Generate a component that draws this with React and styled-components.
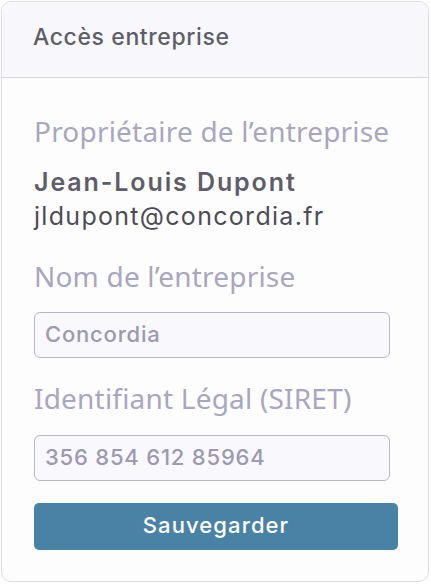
import React from "react";
import styled, { createGlobalStyle } from "styled-components";

const Global = createGlobalStyle`
  html, body { margin: 0; padding: 0; background: #ffffff; }
  * { box-sizing: border-box; }
`;

const Card = styled.section`
  margin: 1px 0 0 1px;
  width: 428px;
  height: 581px;
  border: 1px solid #dcdbe6;
  border-radius: 10px;
  background: #fdfdfe;
  overflow: hidden;
  display: flex;
  flex-direction: column;
`;

const Header = styled.header`
  height: 76px;
  flex: none;
  background: #f8f8fc;
  border-bottom: 1px solid #d6d4e2;
  padding: 21px 0 0 31px;
  font-family: Inter, "Liberation Sans", sans-serif;
  font-weight: 500;
  font-size: 23px;
  line-height: 28px;
  letter-spacing: 0.6px;
  color: #5e5d68;
  white-space: nowrap;
`;

const Body = styled.div`
  display: flex;
  flex-direction: column;
  align-items: flex-start;
  padding: 36px 0 0 32px;
`;

const Label = styled.div`
  font-family: "Noto Sans", "Open Sans", sans-serif;
  font-size: 28px;
  line-height: 34px;
  letter-spacing: 0.2px;
  color: #a9a6bf;
  white-space: nowrap;
  margin-top: ${(p) => p.$mt || 0}px;
`;

const Name = styled.div`
  font-family: Inter, "Liberation Sans", sans-serif;
  font-weight: 600;
  font-size: 25px;
  line-height: 30px;
  letter-spacing: 1.9px;
  color: #5e5d69;
  white-space: nowrap;
  margin-top: 19px;
`;

const Email = styled.div`
  font-family: Inter, "Liberation Sans", sans-serif;
  font-size: 25px;
  line-height: 30px;
  letter-spacing: 1.3px;
  color: #4d4c56;
  white-space: nowrap;
  margin-top: 4px;
`;

const Field = styled.div`
  width: 356px;
  height: 46px;
  border: 1px solid #b7b4cb;
  border-radius: 6px;
  background: #f8f8fd;
  display: flex;
  align-items: center;
  padding: 0 0 2px 10px;
  font-family: Inter, "Liberation Sans", sans-serif;
  font-weight: 500;
  font-size: 22px;
  letter-spacing: 0.8px;
  color: #9c99b0;
  white-space: nowrap;
  margin-top: ${(p) => p.$mt || 0}px;
`;

const Button = styled.button`
  width: 364px;
  height: 47px;
  margin-top: 22px;
  border: none;
  border-radius: 5px;
  background: #4a82a5;
  color: #ffffff;
  font-family: Inter, "Liberation Sans", sans-serif;
  font-weight: 500;
  font-size: 22px;
  letter-spacing: 1.1px;
  display: flex;
  align-items: center;
  justify-content: center;
  padding: 0 0 3px;
  cursor: pointer;
`;

export default function App() {
  return (
    <>
      <Global />
      <Card>
        <Header>Accès entreprise</Header>
        <Body>
          <Label>Propriétaire de l’entreprise</Label>
          <Name>Jean-Louis Dupont</Name>
          <Email>jldupont@concordia.fr</Email>
          <Label $mt={28}>Nom de l’entreprise</Label>
          <Field $mt={19}>Concordia</Field>
          <Label $mt={23}>Identifiant Légal (SIRET)</Label>
          <Field $mt={20}>356 854 612 85964</Field>
          <Button>Sauvegarder</Button>
        </Body>
      </Card>
    </>
  );
}
